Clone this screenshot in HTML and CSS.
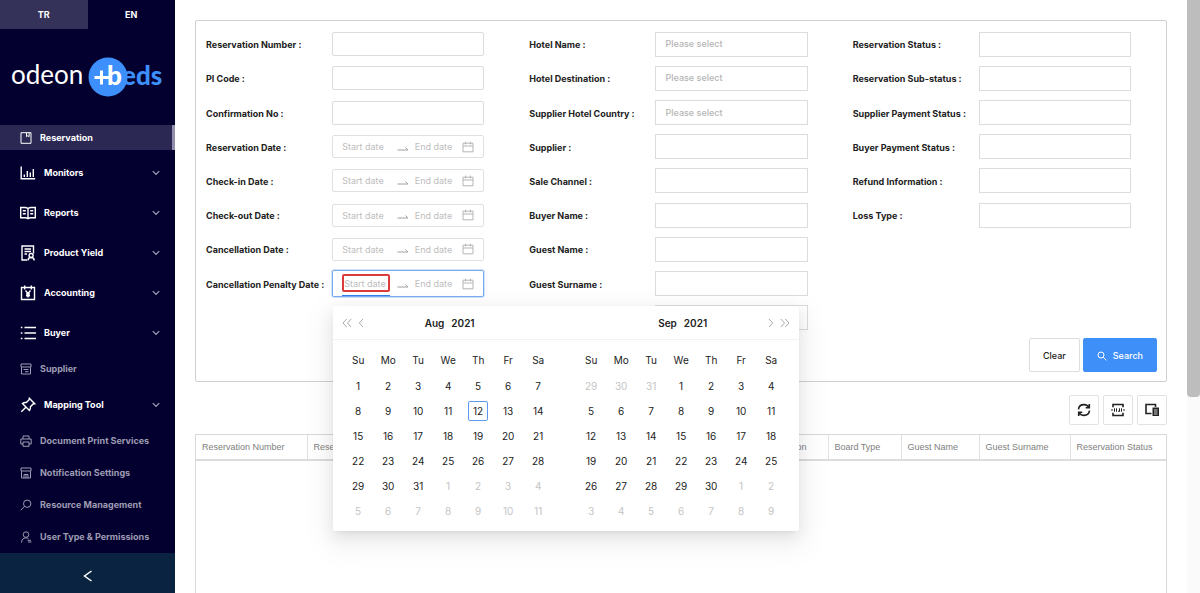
FILE: index.html
```html
<!DOCTYPE html>
<html lang="en">
<head>
<meta charset="utf-8">
<title>Reservations</title>
<link rel="stylesheet" href="styles.css">
</head>
<body>
<svg class="defs" aria-hidden="true">
  <symbol id="chev" viewBox="0 0 8 6"><path d="M.8 1.2 4 4.4 7.2 1.2"/></symbol>
  <symbol id="cal" viewBox="0 0 12 12"><path d="M1 2.2h10v8.6H1zM1 5h10M3.6.6v2.8M8.4.6v2.8"/></symbol>
  <symbol id="swap" viewBox="0 0 12 12"><path d="M.5 9h10.5L8.500 6.500"/></symbol>
  <symbol id="shop" viewBox="0 0 12 12"><path d="M1 1h10v3H1zM1.500 4v7h9V4M3.500 6.500h5M5 8.700h3.500"/></symbol>
</svg>
<div class="app">
  <aside class="sidebar">
    <div class="langs">
      <button class="lang lang-on" type="button">TR</button>
      <button class="lang" type="button">EN</button>
    </div>
    <div class="brand">
      <svg class="logo" viewBox="0 0 175 44" role="img" aria-label="odeon beds">
        <text class="logo-word" x="11" y="29">odeon</text>
        <text class="logo-eds" x="122" y="30">eds</text>
        <circle cx="108" cy="22" r="19.5"/>
        <text class="logo-b" x="107" y="30">b</text>
        <path class="logo-plus" d="M94.500 22.500h15M101.500 15.500v14"/>
      </svg>
    </div>
    <nav class="menu">
      <a class="item leaf current" href="#"><svg viewBox="0 0 12 12"><path d="M1 .7h10v10.600H1zM6.500 .7v4l1.300-1 1.300 1v-4"/></svg><span>Reservation</span></a>
      <a class="item group" href="#"><svg viewBox="0 0 16 16"><path d="M1.200 1.500v12.300h14M4.300 12V9.500M7.300 12V6M10.300 12V7.500M13.300 12V4"/></svg><span>Monitors</span><svg class="chev"><use href="#chev"/></svg></a>
      <a class="item group" href="#"><svg viewBox="0 0 16 16"><path d="M8 3.500C7 2.800 6 2.500 5 2.500H.7v10.200H5c1 0 2 .3 3 1 1-.7 2-1 3-1h4.300V2.500H11c-1 0-2 .3-3 1zM8 3.500v10M2.800 5.800h3M2.800 8.800h3M10.200 5.800h3M10.200 8.800h3"/></svg><span>Reports</span><svg class="chev"><use href="#chev"/></svg></a>
      <a class="item group" href="#"><svg viewBox="0 0 16 16"><path d="M7 15H2V1h11.500v7.500M4.500 4h6.500M4.500 6.500h6.500M4.500 9H7M8 15.500c0-1.800 1-3 3-3s3.200 1.200 3.200 3"/><circle cx="11.100" cy="10.500" r="2"/></svg><span>Product Yield</span><svg class="chev"><use href="#chev"/></svg></a>
      <a class="item group" href="#"><svg viewBox="0 0 16 16"><path d="M1.500 2.500h13v12h-13zM4.700 .5v4M11.300 .5v4M5.500 5.500 8 8.500l2.500-3M8 8.500v4M6 9h4M6 10.800h4"/></svg><span>Accounting</span><svg class="chev"><use href="#chev"/></svg></a>
      <a class="item group" href="#"><svg viewBox="0 0 16 16"><path d="M4.500 2.500H16M4.500 8H16M4.500 13.500H16M.8 2.500h1.600M.8 8h1.600M.8 13.500h1.600"/></svg><span>Buyer</span><svg class="chev"><use href="#chev"/></svg></a>
      <a class="item leaf" href="#"><svg><use href="#shop"/></svg><span>Supplier</span></a>
      <a class="item group" href="#"><svg viewBox="0 0 16 16"><path d="M9.300 1.300l5.400 5.400-1.600.3-2.700 2.800c.2 1.600-.2 2.800-1 3.700L2.500 6.600c.9-.8 2.200-1.200 3.700-1L9 2.900zM5.600 10.400 1.300 14.700"/></svg><span>Mapping Tool</span><svg class="chev"><use href="#chev"/></svg></a>
      <a class="item leaf" href="#"><svg viewBox="0 0 12 12"><path d="M3 4V1h6v3M3 9H.8V4h10.400v5H9M3 7h6v4.300H3z"/></svg><span>Document Print Services</span></a>
      <a class="item leaf" href="#"><svg viewBox="0 0 12 12"><path d="M1 1h10v3H1zM1.500 4v7h9V4M4 11V7.500h4V11M6 7.500V11"/></svg><span>Notification Settings</span></a>
      <a class="item leaf" href="#"><svg viewBox="0 0 12 12"><circle cx="7.200" cy="4.700" r="3.700"/><path d="M4.500 7.400 .7 11.200"/></svg><span>Resource Management</span></a>
      <a class="item leaf" href="#"><svg viewBox="0 0 12 12"><circle cx="6" cy="3.600" r="2.800"/><path d="M1.500 11.500c.2-3 1.800-4.600 4.500-4.600 1 0 1.800.2 2.500.7M7.500 9.300h3.500M8 11h3.500"/></svg><span>User Type &amp; Permissions</span></a>
    </nav>
    <button class="collapse" type="button" aria-label="Collapse menu"><svg viewBox="0 0 10 12"><path d="M8.500 1 1.500 6l7 5"/></svg></button>
  </aside>

  <main class="main">
    <form class="filters">
      <div class="cols">
        <div class="col">
          <div class="field"><label for="f1">Reservation Number :</label><input class="box round" id="f1" type="text"></div>
          <div class="field"><label for="f2">PI Code :</label><input class="box round" id="f2" type="text"></div>
          <div class="field"><label for="f3">Confirmation No :</label><input class="box round" id="f3" type="text"></div>
          <div class="field"><label for="f4">Reservation Date :</label><div class="range"><input id="f4" type="text" placeholder="Start date"><svg class="swap"><use href="#swap"/></svg><input type="text" placeholder="End date" aria-label="Reservation end date"><svg class="cal"><use href="#cal"/></svg></div></div>
          <div class="field"><label for="f5">Check-in Date :</label><div class="range"><input id="f5" type="text" placeholder="Start date"><svg class="swap"><use href="#swap"/></svg><input type="text" placeholder="End date" aria-label="Check-in end date"><svg class="cal"><use href="#cal"/></svg></div></div>
          <div class="field"><label for="f6">Check-out Date :</label><div class="range"><input id="f6" type="text" placeholder="Start date"><svg class="swap"><use href="#swap"/></svg><input type="text" placeholder="End date" aria-label="Check-out end date"><svg class="cal"><use href="#cal"/></svg></div></div>
          <div class="field"><label for="f7">Cancellation Date :</label><div class="range"><input id="f7" type="text" placeholder="Start date"><svg class="swap"><use href="#swap"/></svg><input type="text" placeholder="End date" aria-label="Cancellation end date"><svg class="cal"><use href="#cal"/></svg></div></div>
          <div class="field"><label for="f8">Cancellation Penalty Date :</label>
            <div class="range open"><span class="active"><input class="marked" id="f8" type="text" placeholder="Start date"></span><svg class="swap"><use href="#swap"/></svg><input type="text" placeholder="End date" aria-label="Cancellation penalty end date"><svg class="cal"><use href="#cal"/></svg>
              <div class="picker">
                <section class="month">
                  <header class="month-head">
                    <div class="steps"><button type="button" aria-label="Previous year"><svg viewBox="0 0 10 10"><path d="M4.700 1 1 5l3.700 4M9.200 1 5.500 5l3.700 4"/></svg></button><button type="button" aria-label="Previous month"><svg viewBox="0 0 10 10"><path d="M7 1 3.300 5 7 9"/></svg></button></div>
                    <div class="title"><button type="button">Aug</button><button type="button">2021</button></div>
                    <div class="steps"></div>
                  </header>
                  <table class="days">
                    <thead><tr><th>Su</th><th>Mo</th><th>Tu</th><th>We</th><th>Th</th><th>Fr</th><th>Sa</th></tr></thead>
                    <tbody>
                      <tr><td>1</td><td>2</td><td>3</td><td>4</td><td>5</td><td>6</td><td>7</td></tr>
                      <tr><td>8</td><td>9</td><td>10</td><td>11</td><td><span class="today">12</span></td><td>13</td><td>14</td></tr>
                      <tr><td>15</td><td>16</td><td>17</td><td>18</td><td>19</td><td>20</td><td>21</td></tr>
                      <tr><td>22</td><td>23</td><td>24</td><td>25</td><td>26</td><td>27</td><td>28</td></tr>
                      <tr><td>29</td><td>30</td><td>31</td><td class="out">1</td><td class="out">2</td><td class="out">3</td><td class="out">4</td></tr>
                      <tr class="out"><td>5</td><td>6</td><td>7</td><td>8</td><td>9</td><td>10</td><td>11</td></tr>
                    </tbody>
                  </table>
                </section>
                <section class="month">
                  <header class="month-head">
                    <div class="steps"></div>
                    <div class="title"><button type="button">Sep</button><button type="button">2021</button></div>
                    <div class="steps steps-end"><button type="button" aria-label="Next month"><svg viewBox="0 0 10 10"><path d="M3 1l3.700 4L3 9"/></svg></button><button type="button" aria-label="Next year"><svg viewBox="0 0 10 10"><path d="M.8 1l3.700 4L.8 9M5.300 1 9 5 5.300 9"/></svg></button></div>
                  </header>
                  <table class="days">
                    <thead><tr><th>Su</th><th>Mo</th><th>Tu</th><th>We</th><th>Th</th><th>Fr</th><th>Sa</th></tr></thead>
                    <tbody>
                      <tr><td class="out">29</td><td class="out">30</td><td class="out">31</td><td>1</td><td>2</td><td>3</td><td>4</td></tr>
                      <tr><td>5</td><td>6</td><td>7</td><td>8</td><td>9</td><td>10</td><td>11</td></tr>
                      <tr><td>12</td><td>13</td><td>14</td><td>15</td><td>16</td><td>17</td><td>18</td></tr>
                      <tr><td>19</td><td>20</td><td>21</td><td>22</td><td>23</td><td>24</td><td>25</td></tr>
                      <tr><td>26</td><td>27</td><td>28</td><td>29</td><td>30</td><td class="out">1</td><td class="out">2</td></tr>
                      <tr class="out"><td>3</td><td>4</td><td>5</td><td>6</td><td>7</td><td>8</td><td>9</td></tr>
                    </tbody>
                  </table>
                </section>
              </div>
            </div>
          </div>
        </div>
        <div class="col">
          <div class="field"><label for="g1">Hotel Name :</label><select class="box" id="g1"><option>Please select</option></select></div>
          <div class="field"><label for="g2">Hotel Destination :</label><select class="box" id="g2"><option>Please select</option></select></div>
          <div class="field"><label for="g3">Supplier Hotel Country :</label><select class="box" id="g3"><option>Please select</option></select></div>
          <div class="field"><label for="g4">Supplier :</label><select class="box" id="g4"></select></div>
          <div class="field"><label for="g5">Sale Channel :</label><select class="box" id="g5"></select></div>
          <div class="field"><label for="g6">Buyer Name :</label><select class="box" id="g6"></select></div>
          <div class="field"><label for="g7">Guest Name :</label><input class="box" id="g7" type="text"></div>
          <div class="field"><label for="g8">Guest Surname :</label><input class="box" id="g8" type="text"></div>
          <div class="field"><span></span><input class="box" type="text"></div>
        </div>
        <div class="col">
          <div class="field"><label for="h1">Reservation Status :</label><select class="box" id="h1"></select></div>
          <div class="field"><label for="h2">Reservation Sub-status :</label><select class="box" id="h2"></select></div>
          <div class="field"><label for="h3">Supplier Payment Status :</label><select class="box" id="h3"></select></div>
          <div class="field"><label for="h4">Buyer Payment Status :</label><select class="box" id="h4"></select></div>
          <div class="field"><label for="h5">Refund Information :</label><select class="box" id="h5"></select></div>
          <div class="field"><label for="h6">Loss Type :</label><select class="box" id="h6"></select></div>
        </div>
      </div>
      <div class="actions">
        <button class="btn" type="reset">Clear</button>
        <button class="btn primary" type="button"><svg viewBox="0 0 10 10"><circle cx="4" cy="4" r="3"/><path d="M6.200 6.200 9.300 9.300"/></svg>Search</button>
      </div>
    </form>

    <div class="tools">
      <button type="button" aria-label="Refresh"><svg viewBox="0 0 14 14"><path d="M1.500 6.300C1.800 3.500 4 1.600 7 1.600c2 0 3.700 1 4.700 2.600M12.500 7.700c-.3 2.800-2.500 4.700-5.500 4.700-2 0-3.700-1-4.700-2.600M12.300 1v3.700H8.700M1.700 13V9.300h3.600"/></svg></button>
      <button type="button" aria-label="Row density"><svg viewBox="0 0 14 14"><path d="M2 4.200V1.500h10v2.700M2 9.800v2.700h10V9.800"/><path class="fine" d="M0 7h2M12 7h2M3.500 5.300v3.400M5.500 5.300v3.400M7 8.200h1.500M8.500 5.300v3.400M10.500 5.300v3.400"/></svg></button>
      <button type="button" aria-label="Columns"><svg viewBox="0 0 14 14"><path d="M6.500 10.500H1V1.500h9.500V4"/><path class="solid" d="M7.500 4.500H14V13H7.500z"/><path class="cut" d="M9 7h3.500M9 9h3.500M9 11h3.500"/></svg></button>
    </div>

    <div class="grid">
      <table class="results">
        <colgroup><col class="w-num"><col><col class="w-dest"><col class="w-board"><col class="w-guest"><col class="w-sur"><col class="w-stat"></colgroup>
        <thead><tr><th>Reservation Number</th><th>Reservation Date</th><th>Destination</th><th>Board Type</th><th>Guest Name</th><th>Guest Surname</th><th>Reservation Status</th></tr></thead>
      </table>
    </div>
  </main>
  <div class="scroll"><div class="thumb"></div></div>
</div>
</body>
</html>
```

FILE: styles.css
```css
* { box-sizing: border-box; }
body { margin: 0; background: #fff; color: #222; font: 9px/14px Inter, sans-serif; }
button, input, select { font: inherit; color: inherit; margin: 0; padding: 0; border: 0; background: none; }
input, select { min-width: 0; width: 100%; outline: 0; }
svg { fill: none; stroke: currentColor; display: block; flex: none; }
.defs { display: none; }
.app { display: flex; height: 100vh; overflow: hidden; }

/* Sidebar */
.sidebar { flex: none; width: 175px; display: flex; flex-direction: column; background: #03002f; color: #fff; }
.langs { display: grid; grid-template-columns: 1fr 1fr; height: 29px; }
.lang { font-weight: 700; }
.lang-on { background: #353259; }
.brand { padding: 26px 0; }
.logo { width: 175px; height: 44px; stroke: none; font-family: Lato, sans-serif; font-size: 26px; }
.logo-word { fill: #fff; }
.logo-eds { fill: #3d8ffb; font-weight: 900; }
.logo circle { fill: #3d8ffb; }
.logo-b { fill: #fff; font-weight: 900; }
.logo-plus { stroke: #fff; stroke-width: 3; }
.menu { flex: 1; min-height: 0; overflow: hidden; }
.item { display: flex; align-items: center; padding: 0 15px 0 20px; color: #fff; text-decoration: none; font-weight: 700; }
.item span { flex: 1; white-space: nowrap; }
.leaf { height: 32px; gap: 8px; color: #9d9cb2; }
.leaf svg { width: 12px; height: 12px; }
.group { height: 40px; gap: 8px; }
.group svg { width: 16px; height: 16px; stroke-width: 1.4; }
.group .chev { width: 8px; height: 6px; color: #a5a4ba; stroke-width: 1.2; }
.current { height: 25px; margin-bottom: 3px; background: #2b2953; border-right: 3px solid #918fab; color: #fff; }
.collapse { flex: none; height: 40px; padding-top: 6px; display: flex; align-items: center; justify-content: center; background: #0a2340; }
.collapse svg { width: 10px; height: 12px; stroke-width: 1.5; }

/* Filters */
.main { flex: 1; min-width: 0; display: flex; flex-direction: column; padding: 20px 20px 0; }
.filters { border: 1px solid #d0d0d0; border-radius: 2px; padding: 6px 9px 9px 10px; }
.cols { display: grid; grid-template-columns: repeat(3, 1fr); column-gap: 45px; min-height: 308px; padding-right: 26px; }
.col { display: grid; grid-template-rows: repeat(9, 1fr); }
.field { display: grid; grid-template-columns: 126fr 152fr; align-items: center; }
.field label { padding-top: 2px; font-weight: 700; white-space: nowrap; }
.box { height: 25px; padding: 0 9px; border: 1px solid #dcdcdc; background: #fff; appearance: none; color: #b5b5b5; font-weight: 500; }
.round { height: 24px; border-radius: 2px; }
.range { position: relative; display: flex; align-items: center; height: 23px; padding: 0 9px; border: 1px solid #e0e0e0; border-radius: 2px; }
.range > input { flex: 1; padding-top: 1px; }
.active { flex: 1; }
.range input::placeholder { color: #bdbdbd; opacity: 1; }
.swap { width: 12px; height: 12px; margin: 0 6px 0 7px; color: #a0a0a0; }
.cal { width: 12px; height: 12px; color: #b5b5b5; }
.open { height: 27px; border-color: #79acf0; box-shadow: 0 0 0 1px #cfe1fa; }
.active { height: 25px; padding-top: 3px; border-bottom: 1px solid #2f80ed; }
.marked { height: 18px; border: 2px solid #dd3c3c; border-radius: 2px; }
.actions { display: flex; justify-content: flex-end; gap: 3px; padding-top: 3px; }
.btn { height: 34px; padding: 1px 13px 0; border: 1px solid #ddd; border-radius: 2px; display: flex; align-items: center; gap: 6px; font-weight: 500; }
.primary { background: #3f8ff9; border-color: #3f8ff9; color: #fff; }
.primary svg { width: 10px; height: 10px; }

/* Date range popup */
.picker { position: absolute; z-index: 5; top: 35px; left: 0; width: 466px; display: grid; grid-template-columns: 1fr 1fr; padding-bottom: 8px; background: #fff; border-radius: 2px; box-shadow: 0 3px 6px -4px rgba(0,0,0,.12), 0 6px 16px rgba(0,0,0,.08), 0 9px 28px 8px rgba(0,0,0,.05); }
.month-head { display: flex; align-items: center; justify-content: space-between; height: 34px; padding: 0 9px; border-bottom: 1px solid #f2f2f2; font-size: 10px; }
.steps { display: flex; gap: 4px; width: 32px; color: #a8a8a8; }
.steps-end { justify-content: flex-end; }
.steps svg { width: 10px; height: 10px; }
.title { display: flex; gap: 7px; font-weight: 600; }
.days { margin: 7px 10px 0; width: 210px; border-collapse: collapse; table-layout: fixed; font-size: 10px; text-align: center; }
.days th { height: 26px; padding: 0; font-weight: 400; }
.days td { height: 25px; padding: 0; }
.days .out { color: #c4c4c4; }
.today { display: inline-block; width: 20px; line-height: 18px; border: 1px solid #5c9af0; border-radius: 2px; }

/* Results */
.tools { display: flex; justify-content: flex-end; gap: 4px; padding: 13px 0 9px; }
.tools button { width: 30px; height: 30px; border: 1px solid #e2e2e2; border-radius: 2px; display: flex; align-items: center; justify-content: center; }
.tools svg { width: 14px; height: 14px; stroke-width: 1.6; }
.tools .fine { stroke-width: 1; }
.tools .solid { fill: #222; stroke: none; }
.tools .cut { stroke: #fff; stroke-width: .8; }
.grid { flex: 1; border: 1px solid #d8d8d8; border-bottom: 0; }
.results { width: 100%; table-layout: fixed; border-collapse: collapse; font-family: "Liberation Sans", Arial, sans-serif; color: #808080; }
.results th { height: 25px; padding: 0 6px; border-bottom: 2px solid #dcdcdc; border-right: 1px solid #e2e2e2; font-weight: 400; text-align: left; white-space: nowrap; }
.results th:last-child { border-right: 0; }
.w-num { width: 111px; }
.w-dest { width: 73px; }
.w-board { width: 73px; }
.w-guest { width: 78px; }
.w-sur { width: 91px; }
.w-stat { width: 96px; }
.scroll { flex: none; width: 13px; background: #fafafa; }
.thumb { height: 67%; background: #bdbdbd; border-radius: 0 0 4px 4px; }
```
